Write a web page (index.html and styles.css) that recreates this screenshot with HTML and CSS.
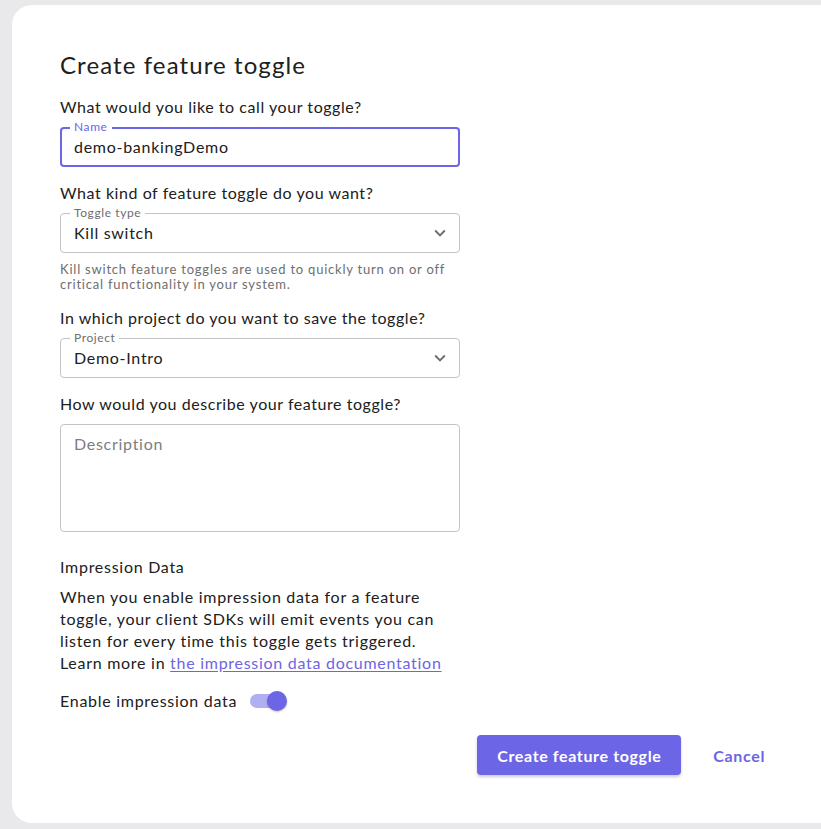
FILE: index.html
```html
<!DOCTYPE html>
<html lang="en">
<head>
<meta charset="utf-8">
<title>Create feature toggle</title>
<link rel="stylesheet" href="styles.css">
</head>
<body>
<main class="card">
  <form class="form">
    <h1 class="title">Create feature toggle</h1>

    <p class="question first">What would you like to call your toggle?</p>
    <div class="field focused">
      <span class="legend">Name</span>
      <span class="value">demo-bankingDemo</span>
    </div>

    <p class="question">What kind of feature toggle do you want?</p>
    <div class="field">
      <span class="legend">Toggle type</span>
      <span class="value">Kill switch</span>
      <svg class="chevron" viewBox="0 0 24 24" width="24" height="24"><path d="M7.41 8.59 12 13.17l4.59-4.58L18 10l-6 6-6-6 1.41-1.41z"/></svg>
    </div>
    <p class="helper">Kill switch feature toggles are used to quickly turn on or off<br>critical functionality in your system.</p>

    <p class="question">In which project do you want to save the toggle?</p>
    <div class="field">
      <span class="legend">Project</span>
      <span class="value">Demo-Intro</span>
      <svg class="chevron" viewBox="0 0 24 24" width="24" height="24"><path d="M7.41 8.59 12 13.17l4.59-4.58L18 10l-6 6-6-6 1.41-1.41z"/></svg>
    </div>

    <p class="question">How would you describe your feature toggle?</p>
    <div class="textarea">
      <span class="placeholder">Description</span>
    </div>

    <h2 class="subtitle">Impression Data</h2>
    <p class="para">When you enable impression data for a feature<br>toggle, your client SDKs will emit events you can<br>listen for every time this toggle gets triggered.<br>Learn more in <a class="link" href="#">the impression data documentation</a></p>

    <div class="switch-row">
      <span class="switch-label">Enable impression data</span>
      <span class="switch"><span class="track"></span><span class="thumb"></span></span>
    </div>
  </form>

  <div class="actions">
    <button class="btn primary" type="button">Create feature toggle</button>
    <button class="btn text" type="button">Cancel</button>
  </div>
</main>
</body>
</html>
```

FILE: styles.css
```css
* { box-sizing: border-box; }
html, body { margin: 0; padding: 0; }
body {
  background: #e9e9eb;
  font-family: "Lato", "Noto Sans", sans-serif;
  color: #202021;
  overflow: hidden;
  letter-spacing: 0.045em;
}
.card {
  margin: 5px 0 0 12px;
  height: 818px;
  background: #ffffff;
  border-radius: 20px 0 0 20px;
  padding: 45px 40px 0 48px;
}
.form {
  width: 400px;
}
.title {
  margin: 0;
  font-size: 24px;
  font-weight: 400;
  line-height: 30px;
  letter-spacing: 0.046em;
}
.question {
  margin: 14px 0 8px;
  font-size: 16px;
  line-height: 24px;
  white-space: nowrap;
  letter-spacing: 0.035em;
}
.question.first { margin-top: 15px; }
.field {
  position: relative;
  height: 40px;
  border: 1px solid #c4c4c8;
  border-radius: 4px;
  display: flex;
  align-items: center;
  padding: 0 13px;
}
.field.focused {
  border: 2px solid #6c65e5;
  padding: 0 12px;
}
.legend {
  position: absolute;
  top: -8px;
  left: 9px;
  padding: 0 4px;
  background: #fff;
  font-size: 12px;
  line-height: 14px;
  color: #6e6e70;
  letter-spacing: 0.05em;
}
.focused .legend { color: #6c65e5; left: 8px; top: -9px; }
.value {
  font-size: 16px;
  line-height: 20px;
  flex: 1;
}
.chevron {
  fill: #6e6e70;
  width: 22px;
  height: 22px;
  margin-right: -5px;
}
.helper {
  margin: 9px 0 0;
  font-size: 13px;
  line-height: 15px;
  color: #6e6e70;
  white-space: nowrap;
  letter-spacing: 0.06em;
}
.textarea {
  height: 108px;
  border: 1px solid #c4c4c8;
  border-radius: 4px;
  padding: 9px 13px;
}
.placeholder {
  font-size: 16px;
  line-height: 20px;
  color: #7d7d80;
}
.subtitle {
  margin: 24px 0 8px;
  font-size: 16px;
  font-weight: 400;
  line-height: 22px;
}
.para {
  margin: 0;
  font-size: 16px;
  line-height: 22px;
  white-space: nowrap;
}
.link {
  color: #6c65e5;
  text-decoration: underline;
  text-underline-offset: 2px;
}
.switch-row {
  display: flex;
  align-items: center;
  gap: 12px;
  height: 38px;
  margin-top: 8px;
}
.switch-label {
  font-size: 16px;
  line-height: 24px;
}
.switch {
  position: relative;
  width: 40px;
  height: 22px;
  display: inline-block;
}
.track {
  position: absolute;
  left: 1px;
  top: 4px;
  width: 34px;
  height: 14px;
  border-radius: 7px;
  background: #b2aef2;
}
.thumb {
  position: absolute;
  left: 18px;
  top: 1px;
  width: 20px;
  height: 20px;
  border-radius: 50%;
  background: #6c65e5;
  box-shadow: 0 1px 2px rgba(0,0,0,0.25);
}
.actions {
  display: flex;
  justify-content: flex-end;
  gap: 16px;
  margin-top: 15px;
}
.btn {
  font-family: inherit;
  font-size: 16px;
  font-weight: 700;
  letter-spacing: 0.04em;
  border: none;
  border-radius: 4px;
  height: 40px;
  cursor: pointer;
}
.btn.primary {
  background: #6c65e5;
  color: #fff;
  width: 204px;
  box-shadow: 0 2px 3px rgba(0,0,0,0.2);
}
.btn.text {
  background: transparent;
  color: #6c65e5;
  padding: 0 16px;
}
```
